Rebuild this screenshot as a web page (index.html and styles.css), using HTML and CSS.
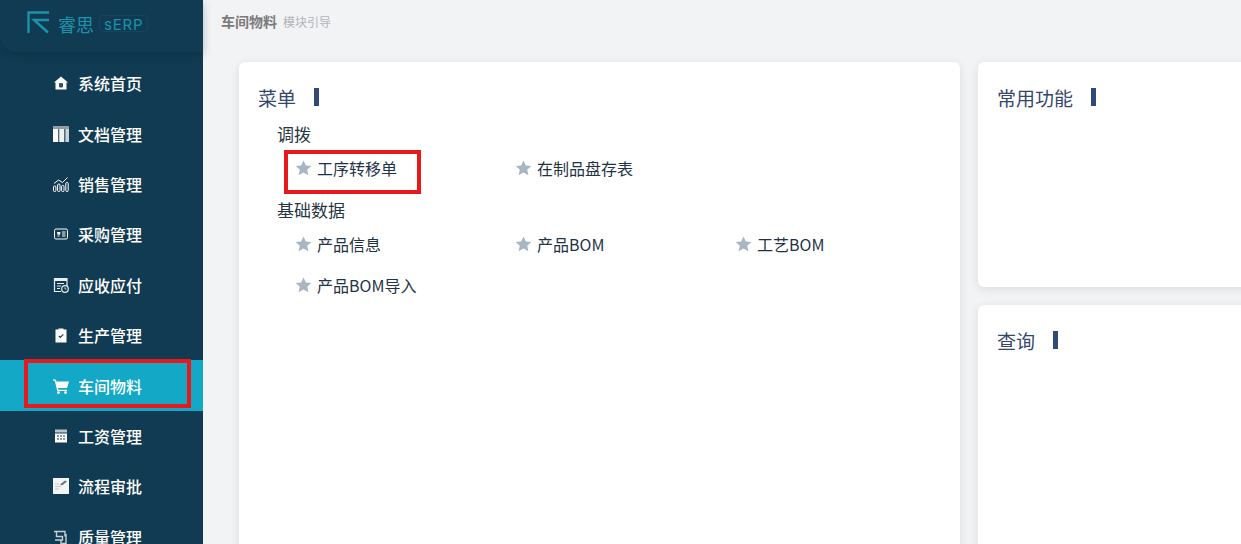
FILE: index.html
```html
<!DOCTYPE html>
<html lang="zh">
<head>
<meta charset="utf-8">
<title>车间物料</title>
<link rel="stylesheet" href="styles.css">
</head>
<body>
<div class="app">
  <aside class="sidebar">
    <div class="logo">
      <svg class="logo-mark" width="23" height="23" viewBox="0 0 23 23"><path d="M1.5 22V1.5H22M22 9H7l14 12.5M7 9l6 -0" fill="none" stroke="#1a93ab" stroke-width="2.4"/></svg>
      <span class="logo-name">睿思</span>
      <span class="logo-tag">sERP</span>
    </div>
    <nav class="menu">
      <a class="menu-item"><svg class="mi" viewBox="0 0 16 16"><path d="M8 1.5 15 7.5H13.5V14.5H2.5V7.5H1Z" fill="#fff"/><rect x="6" y="8" width="4" height="4.5" rx="1" fill="#2d5468"/></svg><span>系统首页</span></a>
      <a class="menu-item"><svg class="mi" viewBox="0 0 16 16"><rect width="16" height="16" fill="#c9d2d6"/><rect x="0" y="0" width="16" height="3" fill="#8f9ea6"/><rect x="5" y="3" width="1.5" height="13" fill="#4d6a7a"/><rect x="11" y="3" width="1.5" height="13" fill="#4d6a7a"/><rect x="0" y="3" width="5" height="13" fill="#fff"/><rect x="6.5" y="3" width="4.5" height="13" fill="#eef1f2"/></svg><span>文档管理</span></a>
      <a class="menu-item"><svg class="mi" viewBox="0 0 16 16"><g fill="none" stroke="#fff" stroke-width="1"><rect x=".5" y="10" width="2.4" height="5.5" rx="1"/><rect x="4.6" y="8" width="2.4" height="7.5" rx="1"/><rect x="8.6" y="9.5" width="2.4" height="6" rx="1"/><rect x="12.8" y="6.5" width="2.4" height="9" rx="1"/><path d="M1 7.5 5.5 4 9.5 6.5 14.5 1.5"/></g></svg><span>销售管理</span></a>
      <a class="menu-item"><svg class="mi" viewBox="0 0 16 16"><rect x="1.5" y="3" width="13" height="10" rx="1.5" fill="none" stroke="#fff"/><path d="M4 6h3.5L7 8.8H4.6Z" fill="#fff"/><path d="M9 6h3.5M9 8h3.5M9 10h3.5M4.5 10h2" stroke="#fff" stroke-width="1"/></svg><span>采购管理</span></a>
      <a class="menu-item"><svg class="mi" viewBox="0 0 16 16"><path d="M14 9V1.5H1.5v13H8" fill="none" stroke="#e8edef" stroke-width="1.2"/><path d="M1.5 1.5h12.5v2.5H1.500Z" fill="#e8edef"/><path d="M4 6.500h7M4 9h4M4 11.500h3" stroke="#e8edef"/><circle cx="12" cy="12" r="3.300" fill="none" stroke="#e8edef" stroke-width="1.200"/><path d="M12 10.200V12h1.500" stroke="#e8edef" fill="none" stroke-width=".8"/></svg><span>应收应付</span></a>
      <a class="menu-item"><svg class="mi" viewBox="0 0 16 16"><path d="M2.500 2.500H5.500V1.500H10.500V2.500H13.500V15.500H2.500Z" fill="#fff"/><path d="M5.800 8.800 7.300 10.300 10.300 7.300" fill="none" stroke="#12394f" stroke-width="1.200"/></svg><span>生产管理</span></a>
      <a class="menu-item is-active"><svg class="mi" viewBox="0 0 16 16"><path d="M0 1.500h2.800l.7 2H16l-2 6.500H5l.5 1.700H14V13H4.200L1.800 2.800H0Z" fill="#fff"/><circle cx="5.500" cy="14.600" r="1.400" fill="#fff"/><circle cx="12.500" cy="14.600" r="1.400" fill="#fff"/></svg><span>车间物料</span></a>
      <a class="menu-item"><svg class="mi" viewBox="0 0 16 16"><rect x="2" y="1.500" width="12" height="3" fill="#b9c4c9"/><rect x="2" y="5.500" width="12" height="9" fill="#fff"/><path d="M4 8h2M7 8h2M10 8h2M4 11h2M7 11h2M10 11h2" stroke="#12394f" stroke-width="1.200"/></svg><span>工资管理</span></a>
      <a class="menu-item"><svg class="mi" viewBox="0 0 16 16"><rect width="16" height="16" fill="#f4f6f6"/><path d="M7 6.500 12 2.500 14 3.500 9 7.500Z" fill="#6c7478"/><path d="M2 6h4M2 8.500h6M2 11h4" stroke="#c4cbce"/></svg><span>流程审批</span></a>
      <a class="menu-item"><svg class="mi" viewBox="0 0 16 16"><path d="M1 2.500h11v5M3.500 2.500v5h6V11H2M13 5v9.500H8v-3" fill="none" stroke="#c4d0d5" stroke-width="1.400"/></svg><span>质量管理</span></a>
    </nav>
  </aside>
  <main class="main">
    <header class="crumb"><b>车间物料</b><small>模块引导</small></header>
    <div class="board">
      <section class="card card-menu">
        <h2 class="card-title">菜单<i class="bar"></i></h2>
        <h3 class="group">调拨</h3>
        <ul class="links">
          <li><svg class="star" viewBox="0 0 16 16"><path d="M8 .5 10.300 5.500 15.800 6.100 11.700 9.800 12.900 15.300 8 12.500 3.100 15.300 4.300 9.800.2 6.100 5.700 5.500Z"/></svg>工序转移单</li>
          <li><svg class="star" viewBox="0 0 16 16"><path d="M8 .5 10.300 5.500 15.800 6.100 11.700 9.800 12.900 15.300 8 12.500 3.100 15.300 4.300 9.800.2 6.100 5.700 5.500Z"/></svg>在制品盘存表</li>
        </ul>
        <h3 class="group">基础数据</h3>
        <ul class="links">
          <li><svg class="star" viewBox="0 0 16 16"><path d="M8 .5 10.300 5.500 15.800 6.100 11.700 9.800 12.900 15.300 8 12.500 3.100 15.300 4.300 9.800.2 6.100 5.700 5.500Z"/></svg>产品信息</li>
          <li><svg class="star" viewBox="0 0 16 16"><path d="M8 .5 10.300 5.500 15.800 6.100 11.700 9.800 12.900 15.300 8 12.500 3.100 15.300 4.300 9.800.2 6.100 5.700 5.500Z"/></svg>产品BOM</li>
          <li><svg class="star" viewBox="0 0 16 16"><path d="M8 .5 10.300 5.500 15.800 6.100 11.700 9.800 12.900 15.300 8 12.500 3.100 15.300 4.300 9.800.2 6.100 5.700 5.500Z"/></svg>工艺BOM</li>
          <li><svg class="star" viewBox="0 0 16 16"><path d="M8 .5 10.300 5.500 15.800 6.100 11.700 9.800 12.900 15.300 8 12.500 3.100 15.300 4.300 9.800.2 6.100 5.700 5.500Z"/></svg>产品BOM导入</li>
        </ul>
      </section>
      <div class="side-col">
        <section class="card card-fav"><h2 class="card-title">常用功能<i class="bar"></i></h2></section>
        <section class="card card-query"><h2 class="card-title">查询<i class="bar"></i></h2></section>
      </div>
    </div>
  </main>
</div>
<div class="mark mark-side"></div>
<div class="mark mark-link"></div>
</body>
</html>
```
FILE: styles.css
```css
* { box-sizing: border-box; }
html, body { margin: 0; height: 100%; overflow: hidden; }
body { font-family: "Noto Sans CJK SC", "Noto Sans", sans-serif; background: #f2f3f5; color: #1f3347; }
.app { display: flex; height: 544px; overflow: hidden; }
.sidebar { width: 203px; flex: none; background: #103b53; color: #fff; }
.logo { height: 52px; display: flex; align-items: flex-start; padding: 11px 0 0 27px; border-bottom-left-radius: 16px; box-shadow: 0 3px 8px rgba(5, 30, 45, .25); }
.logo-mark { flex: none; }
.logo-name { margin-left: 8px; font-size: 18px; line-height: 27px; color: #1a93ab; }
.logo-tag { margin: 4px 0 0 5px; padding: 0 4px; font: 15px/17px "Inter", sans-serif; letter-spacing: .8px; color: #1a93ab; border: 1px solid #16465e; border-radius: 4px; height: 17px; }
.menu { display: flex; flex-direction: column; padding-top: 6px; }
.menu-item { height: 50.4px; flex: none; display: flex; align-items: center; padding-left: 53px; font-size: 16px; font-weight: 500; color: #fff; }
.menu-item.is-active { background: #12a8c6; }
.mi { width: 16px; height: 16px; margin-right: 9px; flex: none; }
.main { flex: 1; min-width: 0; }
.crumb { height: 62px; padding: 10px 0 0 18px; display: flex; align-items: baseline; gap: 6px; color: #7a7a7a; }
.crumb b { font-size: 14px; font-weight: 700; line-height: 22px; }
.crumb small { font-size: 12px; color: #b1b4b8; }
.board { display: flex; gap: 18px; padding-left: 36px; width: 1160px; }
.card { background: #fff; border-radius: 6px; box-shadow: 0 2px 10px rgba(0, 0, 0, .1); }
.card-menu { width: 721px; height: 520px; padding: 20px 0 0 19px; }
.side-col { width: 300px; display: flex; flex-direction: column; gap: 18px; }
.card-fav { height: 225px; padding: 20px 0 0 19px; }
.card-query { height: 300px; padding: 20px 0 0 19px; }
.card-title { margin: 0; display: flex; align-items: center; height: 30px; font-size: 19px; font-weight: 400; color: #33476b; }
.bar { width: 5px; height: 18px; background: #324a79; margin-left: 18px; }
.group { margin: 8px 0 0 19px; font-size: 17px; font-weight: 400; line-height: 27px; color: #263543; }
.links { list-style: none; margin: 0; padding: 0 0 0 37px; display: flex; flex-wrap: wrap; }
.links li { width: 220px; height: 41px; display: flex; align-items: center; font-size: 16px; color: #1f3347; }
.star { width: 17px; height: 16px; margin-right: 5px; fill: #a9b5c1; flex: none; }
.mark { position: absolute; border: 4px solid #e8191c; }
.mark-side { left: 24px; top: 359px; width: 167px; height: 49px; }
.mark-link { left: 284px; top: 150px; width: 137px; height: 44px; }
```
